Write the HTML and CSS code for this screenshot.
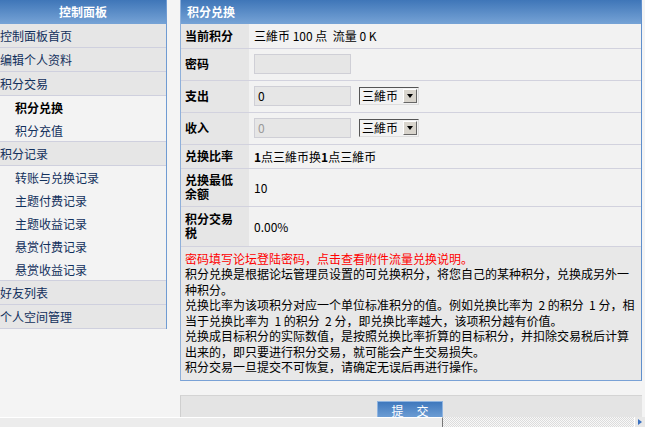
FILE: index.html
```html
<!DOCTYPE html>
<html lang="zh-CN">
<head>
  <meta charset="UTF-8" />
  <title>积分兑换</title>
  <link rel="stylesheet" href="styles.css">
</head>
<body>
  <div class="wrap">
    <div class="side">
      <div class="side-head">控制面板</div>
      <div class="item">控制面板首页</div>
      <div class="item">编辑个人资料</div>
      <div class="item">积分交易</div>
      <div class="group">
        <div class="sub current">积分兑换</div>
        <div class="sub">积分充值</div>
      </div>
      <div class="item">积分记录</div>
      <div class="group">
        <div class="sub">转账与兑换记录</div>
        <div class="sub">主题付费记录</div>
        <div class="sub">主题收益记录</div>
        <div class="sub">悬赏付费记录</div>
        <div class="sub">悬赏收益记录</div>
      </div>
      <div class="item">好友列表</div>
      <div class="item">个人空间管理</div>
    </div>

    <div class="main">
      <div class="panel">
        <div class="panel-head">积分兑换</div>
        <table class="form">
          <tr class="r24">
            <th>当前积分</th>
            <td>三維币 100 点&nbsp; 流量 0 K</td>
          </tr>
          <tr class="r32">
            <th>密码</th>
            <td><span class="input"></span></td>
          </tr>
          <tr class="r32">
            <th>支出</th>
            <td><span class="input">0</span><span class="select">三維币<span class="arrow"></span></span></td>
          </tr>
          <tr class="r32">
            <th>收入</th>
            <td><span class="input off">0</span><span class="select">三維币<span class="arrow"></span></span></td>
          </tr>
          <tr class="r24">
            <th>兑换比率</th>
            <td><b>1</b>点三維币换<b>1</b>点三維币</td>
          </tr>
          <tr class="r38">
            <th>兑换最低余额</th>
            <td>10</td>
          </tr>
          <tr class="r40">
            <th>积分交易税</th>
            <td>0.00%</td>
          </tr>
        </table>
        <div class="notes">
          <p class="warn">密码填写论坛登陆密码，点击查看附件流量兑换说明。</p>
          <p>积分兑换是根据论坛管理员设置的可兑换积分，将您自己的某种积分，兑换成另外一<br>种积分。</p>
          <p>兑换比率为该项积分对应一个单位标准积分的值。例如兑换比率为&nbsp; 2 的积分&nbsp; 1 分，相<br>当于兑换比率为&nbsp; 1 的积分&nbsp; 2 分，即兑换比率越大，该项积分越有价值。</p>
          <p>兑换成目标积分的实际数值，是按照兑换比率折算的目标积分，并扣除交易税后计算<br>出来的，即只要进行积分交易，就可能会产生交易损失。</p>
          <p>积分交易一旦提交不可恢复，请确定无误后再进行操作。</p>
        </div>
      </div>
      <div class="actions">
        <button class="submit">提交</button>
      </div>
    </div>
  </div>

  <div class="hscroll">
    <div class="thumb"></div>
    <div class="track"></div>
    <div class="end"></div>
  </div>
</body>
</html>
```

FILE: styles.css
```css
body {
  margin: 0;
  background-color: #f4f4f4;
  color: #000;
  font-family: "Noto Sans CJK SC", "Liberation Sans", sans-serif;
  font-size: 12px;
  overflow: hidden;
}

.wrap {
  display: flex;
  align-items: flex-start;
}

.side {
  width: 166px;
  border-right: 1px solid #6f9bd2;
  flex-shrink: 0;
}

.side-head {
  height: 24px;
  line-height: 24px;
  text-align: center;
  font-weight: bold;
  color: #fff;
  background: linear-gradient(#3f76b8, #76a3d6);
}

.item {
  height: 23px;
  line-height: 23px;
  background-color: #e6e6e6;
  border-bottom: 1px solid #cfd0de;
  color: #12305c;
  white-space: nowrap;
}

.group {
  background-color: #f3f3f3;
  border-bottom: 1px solid #cfd0de;
  margin-top: -1px;
  border-top: 1px solid #cfd0de;
}

.sub {
  height: 23px;
  line-height: 23px;
  padding-left: 15px;
  color: #12305c;
}

.group .sub:last-child {
  height: 22px;
}

.sub.current {
  font-weight: bold;
  color: #000;
}

.main {
  margin-left: 13px;
  width: 462px;
}

.panel {
  border-left: 1px solid #8fb0da;
  border-right: 1px solid #5f8fcc;
  border-bottom: 1px solid #7aa2d6;
}

.panel-head {
  height: 24px;
  line-height: 24px;
  padding-left: 6px;
  font-weight: bold;
  color: #fff;
  background: linear-gradient(#3f76b8, #76a3d6);
}

.form {
  width: 100%;
  border-collapse: collapse;
}

.form th,
.form td {
  border-bottom: 1px solid #d2d2de;
  padding: 0;
  vertical-align: middle;
}

.form th {
  width: 54px;
  padding: 0 10px 0 4px;
  background-color: #e6e6e6;
  text-align: left;
  line-height: 14px;
}

.form td {
  background-color: #f2f2f2;
  padding-left: 5px;
}

.r24 { height: 24px; }
.r32 { height: 32px; }
.r38 { height: 38px; }
.r40 { height: 40px; }

.input {
  display: inline-block;
  vertical-align: middle;
  box-sizing: border-box;
  width: 97px;
  height: 20px;
  line-height: 18px;
  padding-left: 3px;
  border: 1px solid #cfcfd6;
  background-color: #e6e6e6;
}

.input.off {
  color: #999;
}

.select {
  display: inline-block;
  vertical-align: middle;
  box-sizing: border-box;
  margin-left: 8px;
  width: 60px;
  height: 18px;
  line-height: 15px;
  padding-left: 2px;
  border: 1px solid;
  border-color: #555 #ddd #ddd #555;
  background-color: #f2f2f2;
  position: relative;
}

.arrow {
  position: absolute;
  right: 1px;
  top: 1px;
  width: 14px;
  height: 14px;
  box-sizing: border-box;
  background-color: #d8d4cc;
  border: 1px solid;
  border-color: #fff #666 #666 #fff;
}

.arrow::after {
  content: "";
  position: absolute;
  left: 3px;
  top: 4px;
  border-left: 3px solid transparent;
  border-right: 3px solid transparent;
  border-top: 4px solid #000;
}

.notes {
  background-color: #e8e8e8;
  padding: 4px 4px 5px 4px;
  line-height: 15.5px;
}

.notes p {
  margin: 0;
}

.notes .warn {
  color: #f00;
}

.actions {
  margin-top: 14px;
  height: 40px;
  background-color: #e4e4e4;
  border-top: 1px solid #d4d4d4;
  border-left: 1px solid #cfcfcf;
  padding-top: 5px;
}

.submit {
  display: block;
  box-sizing: border-box;
  width: 66px;
  height: 22px;
  margin-left: 196px;
  padding: 0 0 2px 13px;
  letter-spacing: 13px;
  font-family: inherit;
  font-size: 12px;
  line-height: 16px;
  color: #fff;
  border: 1px solid #8fb4e0;
  background: linear-gradient(#3f78bd, #7aa8db);
}

.hscroll {
  position: fixed;
  left: 0;
  right: 0;
  bottom: 0;
  height: 10px;
  display: flex;
}

.thumb {
  width: 442px;
  background-color: #ececec;
  border-top: 1px solid #fff;
  border-right: 1px solid #777;
}

.track {
  flex: 1;
  background-color: #e6e6e6;
  background-image: repeating-conic-gradient(#f8f8f8 0 25%, #dcdcdc 0 50%);
  background-size: 2px 2px;
}

.end {
  width: 10px;
  background-color: #e8e8e8;
  border-left: 1px solid #fff;
  position: relative;
}

.end::after {
  content: "";
  position: absolute;
  left: 3px;
  top: 2px;
  border-top: 3px solid transparent;
  border-bottom: 3px solid transparent;
  border-left: 4px solid #3a70c0;
}
```
